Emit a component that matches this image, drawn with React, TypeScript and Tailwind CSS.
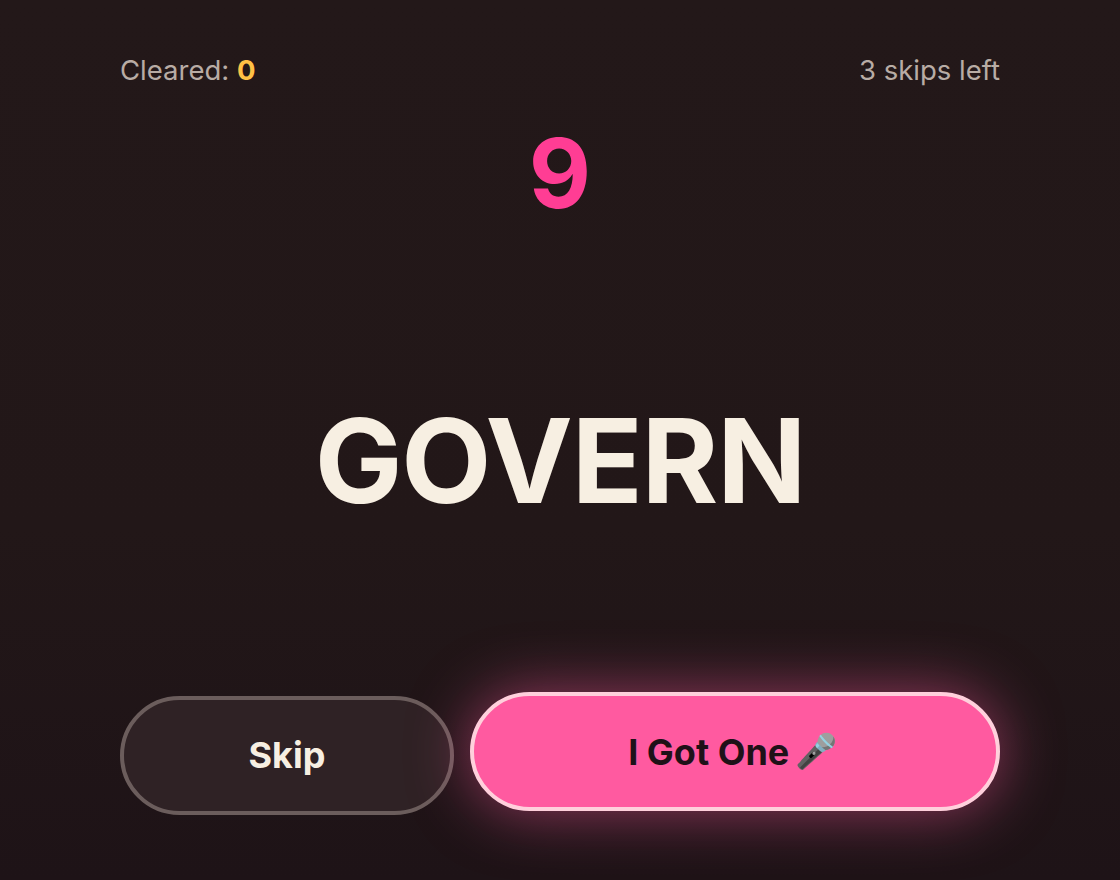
export default function App() {
  return (
    <div className="flex h-[880px] w-full flex-col bg-[linear-gradient(180deg,#231819_0%,#221718_60%,#1e1317_100%)] px-[120px] pb-[65px] pt-[48px] font-['Inter',sans-serif]">
      <div className="flex items-center justify-between text-[27.5px] leading-[44px] text-[#b8aca5]">
        <span>
          Cleared: <span className="font-bold text-[#ffc145]">0</span>
        </span>
        <span>3 skips left</span>
      </div>

      <div className="mt-[23px] text-center text-[96px] font-bold leading-[116px] text-[#ff3d94]">
        9
      </div>

      <div className="flex flex-1 items-center justify-center pb-[7px]">
        <h1 className="text-[117px] font-bold leading-none tracking-[-1.2px] text-[#f7efe2]">GOVERN</h1>
      </div>

      <div className="flex items-center gap-4">
        <button className="h-[119px] w-[334px] rounded-full border-4 border-[#6b5d5c] bg-[#2f2225] pb-[2px] text-[36px] font-bold text-[#f7efe2]">
          Skip
        </button>
        <button className="h-[119px] flex-1 -translate-y-1 rounded-full border-4 border-[#ffd0dc] bg-[#ff5aa0] text-[36px] font-bold text-[#1f1118] shadow-[0_0_60px_rgba(255,90,160,0.52)]">
          I Got One <span className="-ml-[3px] mr-[5px] align-[2px] text-[34px]">🎤</span>
        </button>
      </div>
    </div>
  );
}
